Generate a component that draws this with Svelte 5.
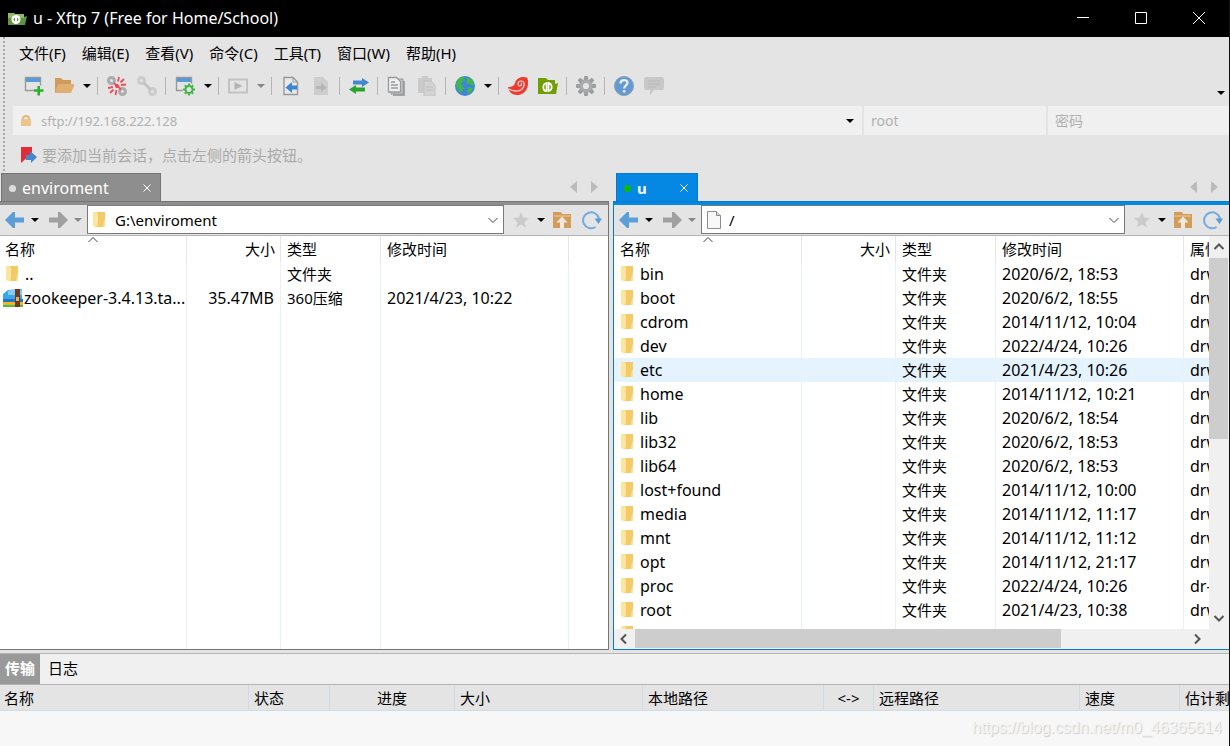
<script>
  const menus = ["文件(F)", "编辑(E)", "查看(V)", "命令(C)", "工具(T)", "窗口(W)", "帮助(H)"];

  const tools = [
    ["new", "新建"],
    ["open", "打开"],
    ["caret", "打开列表"],
    ["sep"],
    ["disconnect", "断开"],
    ["reconnect", "重新连接"],
    ["sep"],
    ["settings", "会话属性"],
    ["caret", "属性列表"],
    ["sep"],
    ["play", "执行"],
    ["caret", "执行列表", true],
    ["sep"],
    ["docleft", "传输到左侧"],
    ["docright", "传输到右侧"],
    ["sep"],
    ["swap", "同步"],
    ["sep"],
    ["copy", "复制"],
    ["paste", "粘贴"],
    ["sep"],
    ["globe", "编码"],
    ["caret", "编码列表"],
    ["sep"],
    ["shell", "Xshell"],
    ["xftp", "Xftp"],
    ["sep"],
    ["gear", "选项"],
    ["sep"],
    ["help", "帮助"],
    ["chat", "反馈"],
  ];

  const dir = (name, time, attr = "drwxr-xr-x") => ({
    name,
    time,
    attr,
    icon: "folder",
    size: "",
    type: "文件夹",
  });

  const panes = [
    {
      side: "local",
      tab: "enviroment",
      path: "G:\\enviroment",
      icon: "folder",
      files: [
        dir("..", "", ""),
        {
          name: "zookeeper-3.4.13.ta...",
          icon: "archive",
          size: "35.47MB",
          type: "360压缩",
          time: "2021/4/23, 10:22",
          attr: "",
        },
      ],
    },
    {
      side: "remote",
      tab: "u",
      path: "/",
      icon: "file",
      files: [
        dir("bin", "2020/6/2, 18:53"),
        dir("boot", "2020/6/2, 18:55"),
        dir("cdrom", "2014/11/12, 10:04"),
        dir("dev", "2022/4/24, 10:26"),
        dir("etc", "2021/4/23, 10:26"),
        dir("home", "2014/11/12, 10:21"),
        dir("lib", "2020/6/2, 18:54"),
        dir("lib32", "2020/6/2, 18:53"),
        dir("lib64", "2020/6/2, 18:53"),
        dir("lost+found", "2014/11/12, 10:00"),
        dir("media", "2014/11/12, 11:17"),
        dir("mnt", "2014/11/12, 11:12"),
        dir("opt", "2014/11/12, 21:17"),
        dir("proc", "2022/4/24, 10:26", "dr-xr-xr-x"),
        dir("root", "2021/4/23, 10:38"),
        { name: "", icon: "folder" },
      ],
    },
  ];

  const transferCols = ["名称", "状态", "进度", "大小", "本地路径", "<->", "远程路径", "速度", "估计剩余时间"];

  const cogTeeth = [0, 45, 90, 135, 180, 225, 270, 315];

  let selected = $state("etc");
</script>

{#snippet icon(name)}
  <svg class="icon" viewBox="0 0 20 20" width="20" height="20" aria-hidden="true">
    {#if name === "new"}
      <path d="M1.5 1.5h15v13h-15z" fill="#e4e4e4" stroke="#9a9a9a" stroke-width="1.4" />
      <path d="M2 2h14v4H2z" fill="#5b9bd5" />
      <path d="M10 14.5h10M15 9.5v10" stroke="#e4e4e4" stroke-width="5" />
      <path d="M10 14.5h9.5M14.7 10v9.5" stroke="#2eae2e" stroke-width="2.6" />
    {:else if name === "open"}
      <path d="M1 2h6l2 2h8v4h3l-4 9H1z" fill="#cf9a5b" />
      <path d="M4 8h17l-4 9H1z" fill="#dfae72" />
    {:else if name === "disconnect" || name === "reconnect"}
      <g
        fill="none"
        stroke={name === "disconnect" ? "#a9acaf" : "#cbcbcb"}
        stroke-width="3"
      >
        <circle cx="4.5" cy="4.5" r="3" />
        <circle cx="15.5" cy="15.5" r="3" />
      </g>
      {#if name === "disconnect"}
        <path
          d="M7 7l2.5 2.5M11 10.5l3 3M12 1l-1 4.5M17 3l-3.5 3.5M19 8.5l-5 .5M1 12l5-1M3 17l3.5-3.5M8.500 19l1-5"
          stroke="#f04c55"
          stroke-width="1.8"
        />
        <circle cx="10" cy="10" r="2" fill="#e64650" />
      {:else}
        <path d="M6.5 6.5l7 7" stroke="#c2c2c2" stroke-width="3" />
      {/if}
    {:else if name === "settings"}
      <path d="M1.5 1.5h15v13h-15z" fill="#e4e4e4" stroke="#9a9a9a" stroke-width="1.4" />
      <path d="M2 2h14v4H2z" fill="#5b9bd5" />
      <circle cx="14" cy="13.5" r="6.5" fill="#e4e4e4" />
      {#each cogTeeth as a (a)}
        <path d="M13 7.500h2v3h-2z" fill="#45b549" transform="rotate({a} 14 13.5)" />
      {/each}
      <circle cx="14" cy="13.5" r="3.5" fill="none" stroke="#45b549" stroke-width="2" />
    {:else if name === "play"}
      <path d="M1 3.5h18v13H1z" fill="none" stroke="#c2c2c2" stroke-width="2" />
      <path d="M6.5 6l8 4-8 4z" fill="#b5b5b5" />
    {:else if name === "docleft"}
      <path d="M3 1.5h9l4.5 4.5v12.5H3z" fill="#e9e9e9" stroke="#9a9a9a" stroke-width="1.4" />
      <path d="M12 1.5V6h4.5" fill="none" stroke="#9a9a9a" />
      <path d="M4.5 11.5L11 6v3.5h5v4h-5V17z" fill="#3a86d4" />
    {:else if name === "docright"}
      <path d="M3 1h9l5 5v13H3z" fill="#cdcdcd" />
      <path d="M15.5 11.5L10 7v3H5v3h5v3z" fill="#b5b5b5" />
    {:else if name === "swap"}
      <path d="M4 4.500h9V2l7 4.500L13 11V8.500H4z" fill="#4486d2" />
      <path d="M16 11.500H7V9l-7 4.500L7 18v-2.500h9z" fill="#28a428" />
    {:else if name === "copy"}
      <path d="M6 5h12v15H6z" fill="#a2a5a7" />
      <path d="M4 3h12v15H4z" fill="#c5c7c8" stroke="#999" />
      <path d="M1.5 1.5h8l4 4V16h-12z" fill="#efefef" stroke="#999c9e" stroke-width="1.3" />
      <path d="M4 6h4M4 9h7M4 12h7" stroke="#999" stroke-width="1.3" />
    {:else if name === "paste"}
      <path d="M1 2h4V0h6v2h4v15H1z" fill="#cacaca" />
      <path d="M7 5h7l4 4v11H7z" fill="#d3d3d3" stroke="#c2c2c2" />
      <path d="M9 11h7M9 14h7" stroke="#bcbcbc" />
    {:else if name === "globe"}
      <circle cx="10" cy="10" r="10" fill="#3e87d6" />
      <path
        d="M4 2l5-1.500 1 3.500-3 2-1 3 3 3-2 3-1 2.500-3-4L1 9l1-4zM13 1l4 2.500 2.500 5-2 1-3-2-2 1-1-3zM14 11l4 1-2 4-3 2-1-3z"
        fill="#43b649"
      />
    {:else if name === "shell"}
      <path
        d="M0 11c4 0 6-1 7-4 1-4 5-6.500 9-6 2 0 3 1 4 1-1 0-1 1 0 2 1 9-4 15-11 15-5 0-8-3-9-8z"
        fill="#f03a30"
      />
      <path
        d="M1 13c5 3 12 3 14.500-2 1.500-3 .5-6-2.500-6-3.500 0-4 4.500-1.500 5 2 0 2.500-2 1.500-3"
        fill="none"
        stroke="#e4e4e4"
        stroke-width="1.200"
      />
    {:else if name === "xftp"}
      <path d="M0 2h8l2 2h7v4l3-1-2 11H0z" fill="#719d07" />
      <path d="M8.500 7v8c-4 .5-4.500-7 0-8zM10.500 6v9c4.500-1 4-7.500 0-8" fill="none" stroke="#fff" stroke-width="1.700" />
    {:else if name === "logo"}
      <path d="M1 4h6l1 1h9v3l3-1-2 9H1z" fill="#5f9440" />
      <path d="M1 4h6l1 1h9v4H1z" fill="#8fb868" />
      <circle cx="9" cy="10.500" r="4.500" fill="#fff" />
      <path d="M8 8.500c-2 1-2 3 0 4zM10 8.500c2 1 2 3 0 4z" fill="#5f9440" />
    {:else if name === "gear"}
      {#each cogTeeth as a (a)}
        <path d="M8.300 0h3.400l.8 5h-5z" fill="#9b9ea1" transform="rotate({a} 10 10)" />
      {/each}
      <circle cx="10" cy="10" r="4.800" fill="none" stroke="#a8abad" stroke-width="3.400" />
    {:else if name === "help"}
      <circle cx="10" cy="10" r="9.500" fill="#6599d2" stroke="#8b9fb6" />
      <path d="M6.500 7.500c0-4.500 7-4.500 7-.7 0 2.700-3.300 2.500-3.300 5.700" fill="none" stroke="#e8eff7" stroke-width="2.300" />
      <circle cx="10.200" cy="15.300" r="1.400" fill="#e8eff7" />
    {:else if name === "chat"}
      <path d="M2 1h16q2 0 2 2v9q0 2-2 2h-8l-4 5v-5H2q-2 0-2-2V3q0-2 2-2z" fill="#c8c8c8" />
      <path d="M4 5h12M4 8h12M4 11h8" stroke="#b8b8b8" />
    {:else if name === "folder"}
      <path d="M4 2h9v15H4z" fill="#f2cb66" />
      <path d="M1 2h4l1 3v8l-1 5-4-2z" fill="#fde5a0" />
      <path d="M12 10h1v7h-2z" fill="#fae29a" />
    {:else if name === "file"}
      <path d="M1.500 1.500h9l4 4v13h-13z" fill="#f8f8f8" stroke="#8c8c8c" />
      <path d="M10.500 1.500v4h4" fill="#ddd" stroke="#8c8c8c" />
    {:else if name === "archive"}
      <path d="M0 6l5-4 14-1v13H0z" fill="#39a7ec" />
      <path d="M5 3l6-2 8 1v5H5z" fill="#84cdf7" />
      <path d="M0 11h20v3H0z" fill="#2077bd" />
      <path d="M0 14h20v2.500H0z" fill="#ffb21c" />
      <path d="M0 16.500h20V19H0z" fill="#61b532" />
      <path d="M12 1h5v18h-5z" fill="#70381d" />
      <path d="M13 9h3v4h-3z" fill="#ddb26a" />
    {:else if name === "back" || name === "forward"}
      <path
        d={name === "back" ? "M0 10l8-8h2v5.500h9v5h-9V18H8z" : "M20 10l-8-8h-2v5.500H1v5h9V18h2z"}
        fill={name === "back" ? "#5c9ed8" : "#a0a0a0"}
      />
    {:else if name === "star"}
      <path d="M10 2l2.200 5.500 5.800.5-4.500 4 1.500 5.500-5-3-5 3L6.500 12 2 8l5.800-.5z" fill="#cacaca" />
    {:else if name === "up"}
      <path d="M1 2h8l1 2h9v14H1z" fill="#d29c5b" />
      <path d="M2 5h16v2H2z" fill="#e0b47c" />
      <path d="M10 6.500l5.500 6H12V18H8v-5.500H4.500z" fill="#f0e8df" />
    {:else if name === "refresh"}
      <path d="M13.500 17A8 8 0 1 1 17 9" fill="none" stroke="#74acdf" stroke-width="2" />
      <path d="M12.500 8.500H20L16.500 14z" fill="#5b9bd5" />
    {/if}
  </svg>
{/snippet}

{#snippet caret(label, dim = false)}
  <button class="caret" class:dim aria-label={label}>
    <svg viewBox="0 0 8 4" width="8" height="4" aria-hidden="true"><path d="M0 0h8L4 4z" /></svg>
  </button>
{/snippet}

{#snippet chevron(turn, bold = false)}
  <svg
    class="chevron"
    class:bold
    viewBox="0 0 12 12"
    width="12"
    height="12"
    aria-hidden="true"
  >
    <path d="M1.500 4L6 8.500 10.500 4" transform="rotate({turn} 6 6)" />
  </svg>
{/snippet}

<div class="window">
  <header class="titlebar">
    <span class="logo">{@render icon("logo")}</span>
    <h1>u - Xftp 7 (Free for Home/School)</h1>
    <button aria-label="最小化">
      <svg viewBox="0 0 12 12" width="12" height="12"><path d="M0 5.500h12" /></svg>
    </button>
    <button aria-label="最大化">
      <svg viewBox="0 0 12 12" width="12" height="12"><path d="M.5.5h11v11H.5z" /></svg>
    </button>
    <button aria-label="关闭">
      <svg viewBox="0 0 12 12" width="12" height="12"><path d="M0 0l12 12M12 0L0 12" /></svg>
    </button>
  </header>

  <div class="bars">
    <nav class="menu">
      {#each menus as menu (menu)}
        <button>{menu}</button>
      {/each}
    </nav>

    <div class="toolbar">
      {#each tools as [name, label, dim]}
        {#if name === "sep"}
          <span class="sep"></span>
        {:else if name === "caret"}
          {@render caret(label, dim)}
        {:else}
          <button class="tool" aria-label={label}>{@render icon(name)}</button>
        {/if}
      {/each}
      <div class="more">{@render caret("更多按钮")}</div>
    </div>

    <div class="address">
      <div class="field">
        <svg viewBox="0 0 12 12" width="12" height="12" aria-hidden="true">
          <path d="M3 6V3.500Q3 1 6 1t3 2.500V6" fill="none" stroke="#dfb882" stroke-width="2" />
          <path d="M1 4h10v7H1z" fill="#eec48d" />
        </svg>
        <input type="text" aria-label="主机" placeholder="sftp://192.168.222.128" />
        {@render caret("主机列表")}
      </div>
      <div class="field"><input type="text" aria-label="用户名" placeholder="root" /></div>
      <div class="field"><input type="password" aria-label="密码" placeholder="密码" /></div>
    </div>

    <div class="hint">
      <svg viewBox="0 0 16 16" width="16" height="16" aria-hidden="true">
        <path d="M0 0h11v6L0 16z" fill="#e02d38" />
        <path d="M5 8h4V4l7 6-6 6v-3H5z" fill="#4587cc" />
      </svg>
      <span>要添加当前会话，点击左侧的箭头按钮。</span>
    </div>
  </div>

  <main class="panes">
    {#each panes as pane (pane.side)}
      <section class="pane {pane.side}">
        <div class="tabs">
          <div class="tab">
            <span class="dot"></span>
            <span class="tab-name">{pane.tab}</span>
            <button aria-label="关闭标签">
              <svg viewBox="0 0 8 8" width="8" height="8"><path d="M.5.5l7 7M7.500.5l-7 7" /></svg>
            </button>
          </div>
          <div class="tab-scroll">
            <button aria-label="上一个标签">
              <svg viewBox="0 0 7 12" width="7" height="12"><path d="M7 0v12L0 6z" /></svg>
            </button>
            <button aria-label="下一个标签">
              <svg viewBox="0 0 7 12" width="7" height="12"><path d="M0 0v12l7-6z" /></svg>
            </button>
          </div>
        </div>

        <div class="frame">
          <div class="nav">
            <button class="step" aria-label="后退">{@render icon("back")}</button>
            {@render caret("后退列表")}
            <button class="step forward" aria-label="前进">{@render icon("forward")}</button>
            {@render caret("前进列表", true)}
            <div class="path">
              {@render icon(pane.icon)}
              <input type="text" aria-label="路径" value={pane.path} />
              <button aria-label="路径列表">{@render chevron(0)}</button>
            </div>
            <button class="star" aria-label="收藏">{@render icon("star")}</button>
            {@render caret("收藏列表")}
            <button class="tool" aria-label="上级目录">{@render icon("up")}</button>
            <button class="tool" aria-label="刷新">{@render icon("refresh")}</button>
          </div>

          <div class="content">
            <div class="list">
              <table>
                <colgroup>
                  <col class="c-name" />
                  <col class="c-size" />
                  <col class="c-type" />
                  <col class="c-time" />
                  <col />
                </colgroup>
                <thead>
                  <tr>
                    <th class="sorted">名称<span class="sort">{@render chevron(180)}</span></th>
                    <th class="size">大小</th>
                    <th>类型</th>
                    <th>修改时间</th>
                    <th>{pane.side === "remote" ? "属性" : ""}</th>
                  </tr>
                </thead>
                <tbody>
                  {#each pane.files as file (file.name)}
                    <tr
                      class:selected={pane.side === "remote" && file.name === selected}
                      onclick={() => (selected = file.name)}
                    >
                      <td class="name">
                        <div class={file.icon}>{@render icon(file.icon)}<span>{file.name}</span></div>
                      </td>
                      <td class="size latin">{file.size}</td>
                      <td>{file.type}</td>
                      <td class="latin">{file.time}</td>
                      <td class="latin">{file.attr}</td>
                    </tr>
                  {/each}
                  {#if pane.side === "local"}
                    <tr class="filler"><td></td><td></td><td></td><td></td><td></td></tr>
                  {/if}
                </tbody>
              </table>
            </div>
            {#if pane.side === "remote"}
              <div class="vscroll">
                <button aria-label="向上滚动">{@render chevron(180, true)}</button>
                <div class="track"><div class="thumb"></div></div>
                <button aria-label="向下滚动">{@render chevron(0, true)}</button>
              </div>
            {/if}
          </div>
          {#if pane.side === "remote"}
            <div class="hscroll">
              <button aria-label="向左滚动">{@render chevron(90, true)}</button>
              <div class="track"><div class="thumb"></div></div>
              <button aria-label="向右滚动">{@render chevron(270, true)}</button>
            </div>
          {/if}
        </div>
      </section>
    {/each}
  </main>

  <footer class="transfers">
    <div class="views">
      <button class="active">传输</button>
      <button>日志</button>
    </div>
    <table>
      <colgroup>
        {#each transferCols as col, i (col)}
          <col class="t{i}" />
        {/each}
      </colgroup>
      <thead>
        <tr>
          {#each transferCols as col, i (col)}
            <th class:center={i === 2 || i === 5}>{col}</th>
          {/each}
        </tr>
      </thead>
    </table>
    <span class="watermark">https://blog.csdn.net/m0_46365614</span>
  </footer>
</div>

<style>
  :global(body) {
    margin: 0;
  }

  .window {
    box-sizing: border-box;
    display: flex;
    flex-direction: column;
    height: 100vh;
    overflow: hidden;
    border-right: 1px solid #111;
    background: #e4e4e4;
    color: #000;
    font: 15px/20px "Noto Sans", "Noto Sans CJK SC", sans-serif;
  }

  button,
  input {
    margin: 0;
    padding: 0;
    border: 0;
    background: none;
    color: inherit;
    font: inherit;
  }

  input {
    min-width: 0;
    flex: 1;
    outline: none;
  }

  svg {
    display: block;
    flex: none;
  }

  .titlebar {
    display: flex;
    align-items: center;
    height: 37px;
    padding-left: 7px;
    background: #000;
    color: #fff;
  }

  .titlebar h1 {
    flex: 1;
    margin: 0 0 2px 6px;
    font-size: 16px;
    font-weight: 400;
  }

  .titlebar button {
    width: 58px;
    height: 36px;
    margin-bottom: 1px;
    display: grid;
    place-items: center;
  }

  .titlebar button:last-child {
    margin-right: 1px;
  }

  .titlebar button path {
    fill: none;
    stroke: #fff;
  }

  .bars {
    margin-left: 3px;
    padding-left: 9px;
    background: radial-gradient(circle at 1px 1px, #a8a8a8 1px, transparent 1px) 0 0 / 3px 4px repeat-y;
  }

  .menu {
    display: flex;
    gap: 16px;
    height: 31px;
    padding-left: 7px;
  }

  .toolbar {
    display: flex;
    align-items: center;
    height: 36px;
    padding: 0 0 1px 7px;
    box-sizing: border-box;
  }

  .tool {
    display: grid;
    place-items: center;
    width: 30px;
    height: 30px;
  }

  .caret {
    display: grid;
    place-items: center;
    width: 15px;
    height: 28px;
  }

  .caret.dim {
    fill: #888;
  }

  .sep {
    box-sizing: border-box;
    width: 8px;
    height: 18px;
    background: linear-gradient(#b5b5b5, #b5b5b5) 3px 0 / 1px 100% no-repeat;
  }

  .more {
    margin: 14px 1px 0 auto;
  }

  .address {
    display: grid;
    grid-template-columns: 1fr 182px 181px;
    gap: 2px;
    margin: 2px 0 0 1px;
  }

  .field {
    display: flex;
    align-items: center;
    height: 29px;
    padding: 0 5px 0 7px;
    background: #f0f0f0;
    font-size: 14px;
  }

  .field:first-child {
    font-size: 13px;
  }

  .field svg + input {
    margin-left: 9px;
  }

  .field input::placeholder {
    color: #b0b0b0;
    opacity: 1;
  }

  .hint {
    display: flex;
    align-items: center;
    gap: 5px;
    height: 38px;
    padding: 1px 0 0 9px;
    box-sizing: border-box;
    color: #aaa;
  }

  .panes {
    flex: 1;
    min-height: 0;
    display: grid;
    grid-template-columns: 609fr 616fr;
    gap: 4px;
  }

  .pane {
    --line: #8e8e8e;
    --edge: #757575;
    display: flex;
    flex-direction: column;
    min-width: 0;
    min-height: 0;
  }

  .remote {
    --line: #0588e3;
    --edge: #0878c8;
  }

  .tabs {
    display: flex;
    align-items: flex-end;
    height: 28px;
    padding-left: 1px;
  }

  .remote .tabs {
    padding-left: 3px;
  }

  .tab {
    box-sizing: border-box;
    display: flex;
    align-items: center;
    width: 160px;
    height: 28px;
    padding: 1px 9px 0 7px;
    border: 1px solid var(--edge);
    border-bottom: 0;
    background: var(--line);
    color: #fff;
    font-size: 16px;
  }

  .remote .tab {
    width: 82px;
    font-size: 15px;
    font-weight: 700;
  }

  .dot {
    width: 7px;
    height: 7px;
    margin-right: 6px;
    border-radius: 50%;
    background: #dcdcdc;
  }

  .remote .dot {
    background: #0fb80f;
  }

  .tab-name {
    flex: 1;
  }

  .tab button path {
    fill: none;
    stroke: #fff;
  }

  .tab-scroll {
    display: flex;
    gap: 14px;
    margin: 0 11px 8px auto;
    fill: #bcbcbc;
  }

  .frame {
    flex: 1;
    min-height: 0;
    display: flex;
    flex-direction: column;
    border: 1px solid var(--edge);
    box-shadow: inset 0 3px var(--line);
    padding-top: 3px;
  }

  .local .frame {
    border-left: 0;
  }

  .remote .frame {
    border-right: 0;
  }

  .nav {
    box-sizing: border-box;
    flex: none;
    display: flex;
    align-items: center;
    height: 31px;
    padding: 0 1px 1px;
    border-bottom: 1px solid #b4b4b4;
  }

  .nav .caret {
    width: 13px;
  }

  .step,
  .star {
    display: grid;
    place-items: center;
    width: 27px;
  }

  .forward {
    margin-left: 3px;
  }

  .star {
    margin-left: 3px;
  }

  .path {
    box-sizing: border-box;
    flex: 1;
    display: flex;
    align-items: center;
    height: 29px;
    margin-left: 3px;
    padding: 0 4px;
    border: 1px solid #7a7a7a;
    background: #fff;
  }

  .path input {
    margin-left: 3px;
  }

  .chevron {
    fill: none;
    stroke: #444;
  }

  .chevron.bold {
    stroke: #555;
    stroke-width: 2;
  }

  .content {
    flex: 1;
    min-height: 0;
    display: flex;
    background: #fff;
  }

  .list {
    flex: 1;
    min-width: 0;
    display: flex;
    overflow: hidden;
  }

  table {
    width: 100%;
    table-layout: fixed;
    border-collapse: separate;
    border-spacing: 0;
  }

  .c-name {
    width: 187px;
  }

  .remote .c-name {
    width: 188px;
  }

  .c-size {
    width: 94px;
  }

  .c-type {
    width: 100px;
  }

  .c-time {
    width: 188px;
  }

  th,
  td {
    box-sizing: border-box;
    height: 24px;
    padding: 0 6px;
    border-right: 1px solid #e8f1fb;
    overflow: hidden;
    font-weight: 400;
    text-align: left;
    white-space: nowrap;
  }

  th {
    height: 26px;
    border-color: #e5e5e5;
  }

  th:last-child,
  td:last-child {
    border-right: 0;
  }

  .latin,
  .name {
    font-size: 16px;
  }

  .local th:first-child {
    padding-left: 5px;
  }

  .sorted {
    position: relative;
  }

  .sort {
    position: absolute;
    top: -2px;
    left: 50%;
    margin-left: -6px;
  }

  .size {
    text-align: right;
  }

  th.size {
    padding-right: 5px;
  }

  .selected td {
    background: #e5f3ff;
  }

  .name {
    padding: 0;
  }

  .name div {
    display: flex;
    align-items: center;
    padding-left: 5px;
  }

  .remote .name div {
    padding-left: 6px;
  }

  .name .archive {
    padding-left: 3px;
  }

  .name .archive span {
    margin-left: 1px;
  }

  .filler td {
    height: auto;
  }

  .vscroll,
  .hscroll {
    flex: none;
    display: flex;
    background: #f0f0f0;
  }

  .vscroll {
    flex-direction: column;
    width: 20px;
  }

  .hscroll {
    height: 20px;
    padding-right: 22px;
  }

  .vscroll button,
  .hscroll button {
    display: grid;
    place-items: center;
    width: 20px;
    height: 20px;
  }

  .vscroll button {
    width: 19px;
    height: 22px;
  }

  .track {
    flex: 1;
  }

  .thumb {
    background: #cdcdcd;
  }

  .vscroll .thumb {
    height: 52%;
    margin-right: 1px;
  }

  .hscroll .thumb {
    width: 77%;
    height: 19px;
    margin-left: 1px;
  }

  .transfers {
    position: relative;
    flex: none;
    height: 93px;
    margin-top: 3px;
    border-top: 1px solid #b4b4b4;
    box-sizing: border-box;
    background: #f7f7f7;
  }

  .views {
    display: flex;
    height: 30px;
    border-bottom: 1px solid #b4b4b4;
    background: #f0f0f0;
  }

  .views button {
    padding: 0 5px 2px;
    margin-right: 3px;
  }

  .views .active {
    background: #999;
    color: #fff;
    font-weight: 700;
  }

  .transfers th {
    height: 26px;
    padding: 0 5px;
    border-right-color: #d0dbe8;
    border-bottom: 1px solid #d0dbe8;
    background: #e4e4e4;
  }

  .transfers th:first-child {
    padding-left: 4px;
  }

  .transfers .center {
    text-align: center;
  }

  .t0 {
    width: 249px;
  }

  .t1 {
    width: 81px;
  }

  .t2 {
    width: 125px;
  }

  .t3 {
    width: 188px;
  }

  .t4 {
    width: 181px;
  }

  .t5 {
    width: 50px;
  }

  .t6 {
    width: 206px;
  }

  .t7 {
    width: 100px;
  }

  .watermark {
    position: absolute;
    right: 7px;
    bottom: 8px;
    color: #f4f4f4;
    font: 16px/20px "Liberation Sans", sans-serif;
    text-shadow: 1px 1px 1px #ccc;
  }
</style>
